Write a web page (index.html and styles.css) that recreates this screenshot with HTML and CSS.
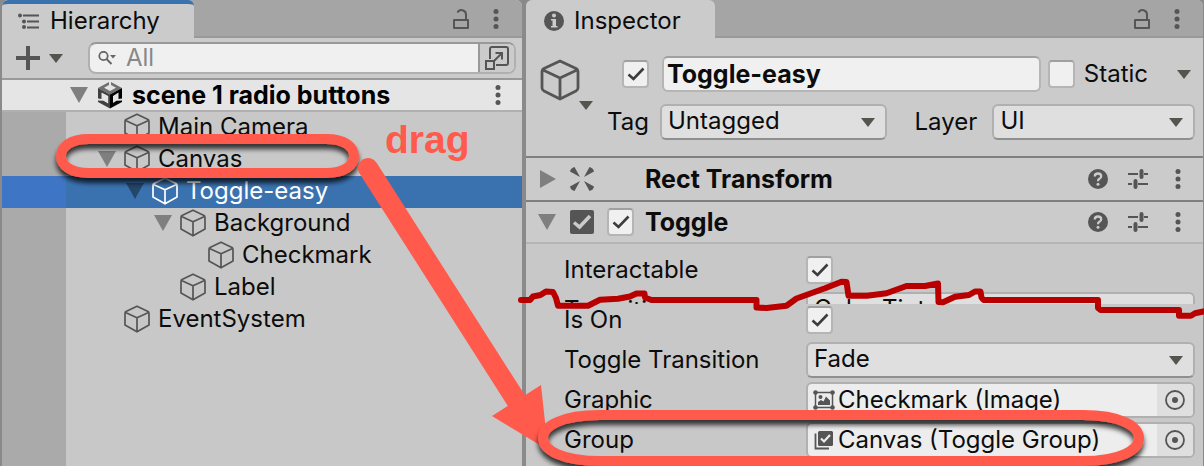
FILE: index.html
```html
<!DOCTYPE html>
<html lang="en">
<head>
<meta charset="utf-8">
<title>Hierarchy and Inspector</title>
<link rel="stylesheet" href="styles.css">
</head>
<body>
<svg class="defs" aria-hidden="true">
  <symbol id="cube" viewBox="0 0 26 28"><path d="M13 1.2 24 6.6Q25 7.200 25 8.500V20L13 26.800 1 20V8.500Q1 7.200 2 6.600ZM1.500 7.500 13 12.800 24.500 7.500M13 12.800V26.500" fill="none" stroke="currentColor" stroke-width="1.700" stroke-linejoin="round"/></symbol>
  <symbol id="bigcube" viewBox="0 0 40 42"><path d="M20 2 36 9.500Q38 10.500 38 13V29Q38 31 36 32L20 40 4 32Q2 31 2 29V13Q2 10.500 4 9.500ZM3 11 20 19 37 11M20 19V40" fill="none" stroke="currentColor" stroke-width="2.800" stroke-linejoin="round"/></symbol>
  <symbol id="down" viewBox="0 0 14 9"><path d="M0 0H14L7 9Z" fill="currentColor"/></symbol>
  <symbol id="fold" viewBox="0 0 18 16"><path d="M0 0H18L9 16Z" fill="currentColor"/></symbol>
  <symbol id="foldright" viewBox="0 0 18 18"><path d="M2 0V18L18 9Z" fill="currentColor"/></symbol>
  <symbol id="dots" viewBox="0 0 6 20"><circle cx="3" cy="2.500" r="2.500" fill="currentColor"/><circle cx="3" cy="10" r="2.500" fill="currentColor"/><circle cx="3" cy="17.500" r="2.500" fill="currentColor"/></symbol>
  <symbol id="lock" viewBox="0 0 16 20"><path d="M1 11H15V19H1ZM13 11V5.500A4.500 4.500 0 0 0 4.500 3.500" fill="none" stroke="currentColor" stroke-width="2" stroke-linejoin="round"/></symbol>
  <symbol id="help" viewBox="0 0 20 20"><circle cx="10" cy="10" r="10" fill="currentColor"/><path d="M6.800 7.500Q6.800 4.500 10 4.500 13.200 4.500 13.200 7.200 13.200 9 11.400 9.800 10 10.500 10 12.200" fill="none" stroke="#cbcbcb" stroke-width="2.300"/><circle cx="10" cy="15.300" r="1.500" fill="#cbcbcb"/></symbol>
  <symbol id="preset" viewBox="0 0 20 20"><path d="M0 5H10M16 5H20M0 15H4M10 15H20" stroke="currentColor" stroke-width="2"/><path d="M13.500 2V8M7.500 12V18" stroke="currentColor" stroke-width="4" stroke-linecap="round"/></symbol>
  <symbol id="picker" viewBox="0 0 20 20"><circle cx="10" cy="10" r="9" fill="none" stroke="currentColor" stroke-width="1.800"/><circle cx="10" cy="10" r="3" fill="currentColor"/></symbol>
  <symbol id="tick" viewBox="0 0 18 14"><path d="M1.500 7.500 6.500 12 16.500 1.500" fill="none" stroke="currentColor" stroke-width="2.600"/></symbol>
</svg>
<main class="editor">
  <section class="panel" aria-label="Hierarchy">
    <header class="tabbar">
      <h2 class="tab tab-active"><svg class="list-icon" viewBox="0 0 21 16"><path d="M5 2.500H21M9 8.500H21M9 14.500H21" stroke="currentColor" stroke-width="1.800"/><circle cx="2" cy="2.500" r="2" fill="currentColor"/><circle cx="6" cy="8.500" r="2" fill="currentColor"/><circle cx="6" cy="14" r="2" fill="currentColor"/></svg>Hierarchy</h2>
      <div class="tab-tools">
        <button class="plain" aria-label="Lock"><svg class="lock"><use href="#lock"/></svg></button>
        <button class="plain" aria-label="Menu"><svg class="dots"><use href="#dots"/></svg></button>
      </div>
    </header>
    <div class="toolbar">
      <button class="plain add" aria-label="Create"><svg class="plus" viewBox="0 0 24 24"><path d="M12 0V24M0 12H24" stroke="currentColor" stroke-width="4"/></svg><svg class="down"><use href="#down"/></svg></button>
      <div class="search">
        <svg class="glass" viewBox="0 0 18 14"><circle cx="5.500" cy="5" r="4.200" fill="none" stroke="currentColor" stroke-width="1.800"/><path d="M8.500 8 13.500 13" stroke="currentColor" stroke-width="2"/><path d="M12 4H18L15 7.500Z" fill="currentColor"/></svg>
        <input class="search-input" type="text" placeholder="All" aria-label="Search hierarchy">
        <button class="plain expand" aria-label="Open search window"><svg class="expand-icon" viewBox="0 0 24 24"><path d="M5 13V3Q5 1 7 1H21Q23 1 23 3V17Q23 19 21 19H11" fill="none" stroke="currentColor" stroke-width="2"/><path d="M1 15H9V23H1ZM9 15 17 7M10.500 7H17V13.500" fill="none" stroke="currentColor" stroke-width="2"/></svg></button>
      </div>
    </div>
    <div class="scene">
      <button class="plain fold" aria-label="Collapse scene"><svg class="fold-icon"><use href="#fold"/></svg></button>
      <svg class="unity" viewBox="0 0 24 28"><path d="M12 .5 24 7 12 13.500 0 7Z" fill="#707070"/><path d="M0 7 12 13.500V27.500L0 21Z" fill="#404040"/><path d="M24 7 12 13.500V27.500L24 21Z" fill="#000"/><path d="M11 0H13V4L18 6.800 12 10 6 6.800 11 4ZM3.500 11.500 10.200 15V22.500L5.500 19.800 0 19.500V17.500L3.500 18ZM20.500 11.500V18L24 17.500V19.500L18.500 19.800 15 22V15Z" fill="#e5e5e5"/></svg>
      <strong class="scene-name">scene 1 radio buttons</strong>
      <button class="plain" aria-label="Scene menu"><svg class="dots"><use href="#dots"/></svg></button>
    </div>
    <ul class="tree">
      <li class="node depth-0"><svg class="cube"><use href="#cube"/></svg>Main Camera</li>
      <li class="node depth-0"><button class="plain fold" aria-label="Collapse Canvas"><svg class="fold-icon"><use href="#fold"/></svg></button><svg class="cube"><use href="#cube"/></svg>Canvas</li>
      <li class="node depth-1 selected"><button class="plain fold" aria-label="Collapse Toggle-easy"><svg class="fold-icon"><use href="#fold"/></svg></button><svg class="cube"><use href="#cube"/></svg>Toggle-easy</li>
      <li class="node depth-2"><button class="plain fold" aria-label="Collapse Background"><svg class="fold-icon"><use href="#fold"/></svg></button><svg class="cube"><use href="#cube"/></svg>Background</li>
      <li class="node depth-3"><svg class="cube"><use href="#cube"/></svg>Checkmark</li>
      <li class="node depth-2"><svg class="cube"><use href="#cube"/></svg>Label</li>
      <li class="node depth-0"><svg class="cube"><use href="#cube"/></svg>EventSystem</li>
    </ul>
  </section>

  <section class="panel" aria-label="Inspector">
    <header class="tabbar">
      <h2 class="tab tab-info"><svg class="info-icon" viewBox="0 0 20 20"><circle cx="10" cy="10" r="10" fill="currentColor"/><circle cx="10" cy="4.500" r="2" fill="#cbcbcb"/><path d="M7 8H12V15H13.500V16.500H7V15H8.500V9.500H7Z" fill="#cbcbcb"/></svg>Inspector</h2>
      <div class="tab-tools">
        <button class="plain" aria-label="Lock"><svg class="lock"><use href="#lock"/></svg></button>
        <button class="plain" aria-label="Menu"><svg class="dots"><use href="#dots"/></svg></button>
      </div>
    </header>
    <div class="object">
      <button class="plain object-icon" aria-label="Select icon"><svg class="bigcube"><use href="#bigcube"/></svg><svg class="down"><use href="#down"/></svg></button>
      <div class="object-fields">
        <div class="object-row name-row">
          <span class="check"><input type="checkbox" class="box" checked aria-label="Active"><svg class="tick"><use href="#tick"/></svg></span>
          <input class="name" type="text" value="Toggle-easy" aria-label="Name">
          <label class="static"><span class="check"><input type="checkbox" class="box"></span>Static</label>
          <button class="plain" aria-label="Static options"><svg class="down"><use href="#down"/></svg></button>
        </div>
        <div class="object-row">
          <label class="short-label" for="tag">Tag</label>
          <span class="drop tag-drop"><select id="tag"><option>Untagged</option></select><svg class="down"><use href="#down"/></svg></span>
          <label class="layer-label" for="layer">Layer</label>
          <span class="drop layer-drop"><select id="layer"><option>UI</option></select><svg class="down"><use href="#down"/></svg></span>
        </div>
      </div>
    </div>
    <div class="component">
      <button class="plain fold" aria-label="Expand Rect Transform"><svg class="foldright"><use href="#foldright"/></svg></button>
      <svg class="comp-icon" viewBox="0 0 24 24"><path d="M10 10 0 4.500Q.5 1 4.500 0ZM14 10 24 4.500Q23.500 1 19.500 0ZM10 14 0 19.500Q.5 23 4.500 24ZM14 14 24 19.500Q23.500 23 19.500 24Z" fill="currentColor"/></svg>
      <span class="check-space"></span>
      <h3 class="comp-name">Rect Transform</h3>
      <div class="comp-tools">
        <button class="plain" aria-label="Help"><svg class="round"><use href="#help"/></svg></button>
        <button class="plain" aria-label="Presets"><svg class="round"><use href="#preset"/></svg></button>
      </div>
      <button class="plain" aria-label="Menu"><svg class="dots"><use href="#dots"/></svg></button>
    </div>
    <div class="component component-open">
      <button class="plain fold" aria-label="Collapse Toggle"><svg class="fold-icon"><use href="#fold"/></svg></button>
      <svg class="comp-icon" viewBox="0 0 24 24"><rect width="24" height="24" rx="2" fill="currentColor"/><path d="M4 12.500 9.500 17 20 6" fill="none" stroke="#cbcbcb" stroke-width="3.500"/></svg>
      <span class="check"><input type="checkbox" class="box" checked aria-label="Toggle enabled"><svg class="tick"><use href="#tick"/></svg></span>
      <h3 class="comp-name">Toggle</h3>
      <div class="comp-tools">
        <button class="plain" aria-label="Help"><svg class="round"><use href="#help"/></svg></button>
        <button class="plain" aria-label="Presets"><svg class="round"><use href="#preset"/></svg></button>
      </div>
      <button class="plain" aria-label="Menu"><svg class="dots"><use href="#dots"/></svg></button>
    </div>
    <div class="props">
      <div class="prop"><label class="prop-label" for="inter">Interactable</label><span class="check"><input id="inter" type="checkbox" class="box" checked><svg class="tick"><use href="#tick"/></svg></span></div>
      <div class="torn"><div class="prop"><label class="prop-label" for="trans">Transition</label><span class="drop"><select id="trans"><option>Color Tint</option></select></span></div></div>
      <div class="prop is-on"><label class="prop-label" for="ison">Is On</label><span class="check"><input id="ison" type="checkbox" class="box" checked><svg class="tick"><use href="#tick"/></svg></span></div>
      <div class="prop"><label class="prop-label" for="tt">Toggle Transition</label><span class="drop"><select id="tt"><option>Fade</option></select><svg class="down"><use href="#down"/></svg></span></div>
      <div class="prop"><span class="prop-label">Graphic</span><div class="objfield"><svg class="ref-icon" viewBox="0 0 22 20"><path d="M2.500 2.500H19.500V17.500H2.500Z" fill="none" stroke="currentColor" stroke-width="1.500"/><path d="M5 15V12L8 10 10.500 11.500 13 6.500 17 10.500V15Z" fill="currentColor"/><g fill="currentColor"><circle cx="2.500" cy="2.500" r="2.300"/><circle cx="19.500" cy="2.500" r="2.300"/><circle cx="2.500" cy="17.500" r="2.300"/><circle cx="19.500" cy="17.500" r="2.300"/><circle cx="7.500" cy="7" r="2"/></g></svg><span class="ref">Checkmark (Image)</span><button class="plain pick" aria-label="Pick graphic"><svg class="round"><use href="#picker"/></svg></button></div></div>
      <div class="prop"><span class="prop-label">Group</span><div class="objfield"><svg class="ref-icon" viewBox="0 0 22 20"><path d="M2.500 3.500V18.500H16" fill="none" stroke="currentColor" stroke-width="1.800"/><rect x="5" y="1" width="15" height="15" rx="1.500" fill="currentColor"/><path d="M8 8.500 11 11.500 17 5" fill="none" stroke="#ededed" stroke-width="2.200"/></svg><span class="ref">Canvas (Toggle Group)</span><button class="plain pick" aria-label="Pick group"><svg class="round"><use href="#picker"/></svg></button></div></div>
    </div>
  </section>
</main>
<svg class="notes" width="1204" height="466" viewBox="0 0 1204 466" aria-hidden="true">
  <defs><filter id="shade" x="-10%" y="-30%" width="120%" height="180%"><feDropShadow dx="0" dy="5" stdDeviation="2.500" flood-color="#000" flood-opacity=".75"/></filter></defs>
  <path class="tear" d="M521 300H530L533 296.500 540.500 295 546 291.500 553 292 556 298 558 305.700H588L600 299.700 618 298.700 630 296.500 636.500 293.500H644.500L645 297.500 651.500 300H756.500V307.500L766.500 308 786.500 305.700 796.500 298.500 825 288.300 841.500 281.700 846.500 282 848.500 295.700H867L886.500 293.300 906.500 286H925L938 283.500 938.500 302 943 302.300 955 296.700 969 295 975 291.500H980.500L981.500 297.500 983.500 300H1098V308L1100.500 310H1179V315.700H1191L1195 313.300 1206 311"/>
  <path class="ring" filter="url(#shade)" d="M89 139H326C345 139 354 147 354 156S345 173 326 173H89C70 173 61 165 61 156S70 139 89 139Z"/>
  <path class="shaft" d="M368 168 516 400"/>
  <path class="head" d="M541 385 548 450 492 416Z"/>
  <path class="ring" filter="url(#shade)" d="M600 415H1083C1120 415 1139 426 1139 438S1120 461 1083 461H600C562 461 543 450 543 438S562 415 600 415Z"/>
  <text class="drag" x="385" y="153">drag</text>
</svg>
</body>
</html>
```
FILE: styles.css
```css
* { box-sizing: border-box; }
body {
  margin: 0;
  position: relative;
  overflow: hidden;
  background: #8a8a8a;
  color: #0c0c0c;
  font: 24px/28px Inter, "Liberation Sans", sans-serif;
}
svg { display: block; flex: none; }
.defs { position: absolute; width: 0; height: 0; }
h2, h3 { margin: 0; font-size: inherit; }
input, select, button { font: inherit; color: inherit; margin: 0; }
.plain { display: flex; padding: 0; border: 0; background: none; color: #555; }

.editor {
  display: grid;
  grid-template-columns: 520fr 677fr;
  gap: 4px;
  min-height: 100vh;
  padding: 0 1px 0 2px;
}
.panel { min-width: 0; background: #c8c8c8; border-radius: 6px 6px 0 0; overflow: hidden; }

.tabbar { display: flex; justify-content: space-between; height: 38px; background: #a5a5a5; box-shadow: inset 0 -2px #999; }
.tab { display: flex; align-items: center; padding: 4px 34px 0 16px; background: #cbcbcb; border-radius: 6px 6px 0 0; font-weight: 400; }
.tab-active { border-top: 4px solid #3a72b0; padding-top: 0; }
.list-icon { width: 21px; height: 16px; margin-right: 11px; color: #555; }
.info-icon { width: 20px; height: 20px; margin: 0 10px 0 2px; color: #555; }
.tab-tools { display: flex; align-items: center; gap: 24px; padding-right: 23px; }
.lock { width: 16px; height: 20px; }
.dots { width: 6px; height: 20px; }
.down { width: 14px; height: 9px; color: #555550; }

.toolbar { display: flex; align-items: center; gap: 25px; height: 42px; padding: 0 6px 0 14px; background: #cbcbcb; border-bottom: 2px solid #999; }
.add { align-items: center; gap: 9px; }
.plus { width: 24px; height: 24px; }
.search { display: flex; align-items: center; flex: 1; height: 32px; padding-left: 8px; background: #f0f0f0; border: 2px solid #b0b0b0; border-top-color: #999; border-radius: 8px; overflow: hidden; }
.glass { width: 18px; height: 14px; color: #666; }
.search-input { flex: 1; min-width: 0; padding: 0 0 0 10px; border: 0; background: none; outline: 0; }
.search-input::placeholder { color: #888; opacity: 1; }
.expand { align-items: center; justify-content: center; width: 36px; height: 28px; background: #cbcbcb; border-left: 2px solid #999; }
.expand-icon { width: 24px; height: 24px; }

.scene { display: flex; align-items: center; height: 32px; padding: 0 21px 0 68px; background: #e5e5e5; border-bottom: 2px solid #b0b0b0; }
.fold { width: 18px; color: #7f7f7f; }
.fold-icon { width: 18px; height: 16px; }
.foldright { width: 18px; height: 18px; }
.unity { width: 24px; height: 28px; margin: 0 10px; }
.scene-name { flex: 1; color: #000; }
.scene-name, .comp-name, .name { font-size: 25px; font-weight: 700; font-optical-sizing: none; }

.tree { margin: 0; padding: 0; list-style: none; min-height: calc(100vh - 112px); background: linear-gradient(90deg, #aaa 64px, transparent 64px); }
.node { display: flex; align-items: center; height: 32px; padding-bottom: 2px; }
.cube { width: 26px; height: 28px; margin-right: 8px; color: #555; }
.node .fold { margin: 0 8px 0 -26px; }
.depth-0 { padding-left: 122px; }
.depth-1 { padding-left: 150px; }
.depth-2 { padding-left: 178px; }
.depth-3 { padding-left: 206px; }
.selected { color: #fff; background: linear-gradient(90deg, #3e75c4 64px, #3a72b0 64px); }
.selected .cube { color: #fff; }
.selected .fold { color: #234669; }

.object { display: flex; gap: 14px; height: 120px; padding: 18px 8px 0 14px; background: #cbcbcb; border-bottom: 2px solid #7f7f7f; }
.object-icon { flex-direction: column; align-items: flex-end; width: 53px; padding-top: 3px; }
.bigcube { width: 40px; height: 42px; align-self: flex-start; }
.object-fields { display: flex; flex: 1; min-width: 0; flex-direction: column; gap: 12px; }
.object-row { display: flex; align-items: center; height: 36px; }
.name-row { padding: 0 4px 0 15px; }
.check, .check-space { flex: none; width: 27px; height: 28px; }
.check { display: grid; place-items: center; }
.check > * { grid-area: 1 / 1; }
.box { appearance: none; width: 27px; height: 28px; background: #f0f0f0; border: 2px solid #b5b5b5; border-top-color: #a0a0a0; border-radius: 4px; }
.tick { width: 18px; height: 14px; color: #3c3c3c; pointer-events: none; }
.name { flex: 1; min-width: 0; height: 36px; margin: 0 7px 0 13px; padding: 0 3px; background: #f0f0f0; border: 2px solid #b5b5b5; border-top-color: #a0a0a0; border-radius: 6px; }
.static { display: flex; align-items: center; gap: 9px; margin-right: 29px; }
.short-label { width: 53px; }
.layer-label { width: 78px; margin-left: 27px; }
.drop { position: relative; display: flex; flex: 1; min-width: 0; }
.drop select { appearance: none; flex: 1; min-width: 0; height: 36px; padding: 0 32px 2px 6px; background: #dfdfdf; border: 2px solid #b0b0b0; border-bottom-color: #8f8f8f; border-radius: 6px; }
.drop .down { position: absolute; right: 12px; top: 14px; pointer-events: none; }
.tag-drop { flex: 228; }
.layer-drop { flex: 203; }

.component { display: flex; align-items: center; height: 44px; padding: 0 22px 0 12px; background: #cbcbcb; border-bottom: 2px solid #7f7f7f; }
.component-open { height: 42px; border-bottom-color: #b5b5b5; }
.comp-icon { width: 24px; height: 24px; margin: 0 13px 0 14px; color: #555; }
.comp-name { flex: 1; margin-left: 11px; }
.comp-tools { display: flex; gap: 20px; margin-right: 27px; }
.round { width: 20px; height: 20px; color: #555; }

.props { display: flex; flex-direction: column; padding: 8px 8px 0 38px; }
.prop { display: flex; align-items: center; height: 36px; margin-bottom: 4px; }
.prop-label { width: 242px; flex: none; }
.torn { height: 12px; overflow: hidden; }
.is-on { height: 32px; margin-bottom: 6px; }
.objfield { display: flex; align-items: center; flex: 1; min-width: 0; height: 36px; padding-left: 5px; background: #ededed; border: 2px solid #b0b0b0; border-radius: 6px; overflow: hidden; }
.ref-icon { width: 22px; height: 20px; color: #555; }
.ref { flex: 1; margin-left: 3px; white-space: nowrap; }
.pick { align-items: center; justify-content: center; width: 36px; height: 32px; background: #dfdfdf; }

.notes { position: absolute; left: 0; top: 0; pointer-events: none; }
.ring { fill: none; stroke: #ff5a4b; stroke-width: 10; }
.shaft { fill: none; stroke: #ff5a4b; stroke-width: 20; stroke-linecap: round; }
.head { fill: #ff5a4b; }
.tear { fill: none; stroke: #b80000; stroke-width: 6; stroke-linecap: round; stroke-linejoin: round; }
.drag { fill: #ff5a4b; font: bold 39px "Liberation Sans", Arial, sans-serif; }
```
